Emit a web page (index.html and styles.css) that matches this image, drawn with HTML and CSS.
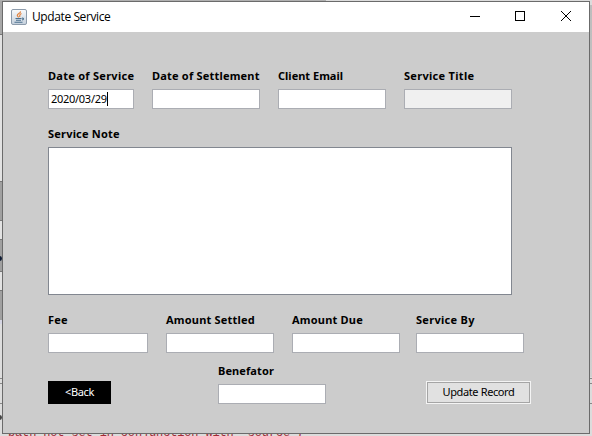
FILE: index.html
```html
<!DOCTYPE html>
<html lang="en">
<head>
<meta charset="utf-8">
<title>Update Service</title>
<link rel="stylesheet" href="styles.css">
</head>
<body>
<div class="desktop">
  <div class="console">path not set in conjunction with -source 7</div>
  <main class="window">
    <header class="titlebar">
      <svg class="java" width="16" height="16" viewBox="0 0 16 16">
        <defs><linearGradient id="g" x2="0" y2="1"><stop stop-color="#fafbfc"/><stop offset="1" stop-color="#c3cfdc"/></linearGradient></defs>
        <rect x=".5" y=".5" width="15" height="15" rx="1.5" fill="url(#g)" stroke="#8c9bab"/>
        <path d="M9.500 2.300C10 4 6 5 6.300 6.500c.1.8 1 1.200 1.300 1.900M10.500 4.500C8 5.500 8.800 6.500 8.700 8" fill="none" stroke="#e58540" stroke-width="1.200"/>
        <path d="M4.500 9.500h6M5 11.300h5M3.500 13.300h8M11 9.300c2-.7 2 1.200 0 1.700" fill="none" stroke="#4c718f" stroke-width="1.100"/>
      </svg>
      <h1 class="title">Update Service</h1>
      <svg class="controls" width="106" height="14" viewBox="0 0 106 14" fill="none" stroke="#000">
        <path d="M2 6.500h10M47.500 1.500h9v9h-9z" shape-rendering="crispEdges"/>
        <path d="M93 1l10 10M103 1L93 11"/>
      </svg>
    </header>
    <form class="form">
      <div class="row">
        <label class="field w86"><span class="label t-dos">Date of Service</span><span class="input">2020/03/29<i class="caret"></i></span></label>
        <label class="field"><span class="label t-set">Date of Settlement</span><span class="input"></span></label>
        <label class="field"><span class="label t-email">Client Email</span><span class="input"></span></label>
        <label class="field"><span class="label t-title">Service Title</span><span class="input disabled"></span></label>
      </div>
      <label class="field note"><span class="label t-note">Service Note</span><span class="area"></span></label>
      <div class="row">
        <label class="field w100"><span class="label t-fee">Fee</span><span class="input"></span></label>
        <label class="field"><span class="label t-amt">Amount Settled</span><span class="input"></span></label>
        <label class="field"><span class="label t-due">Amount Due</span><span class="input"></span></label>
        <label class="field by"><span class="label t-by">Service By</span><span class="input"></span></label>
      </div>
      <div class="row actions">
        <button type="button" class="back">&lt;Back</button>
        <label class="field"><span class="label t-ben">Benefator</span><span class="input"></span></label>
        <button type="button" class="update"><span>Update Record</span></button>
      </div>
    </form>
  </main>
</div>
</body>
</html>
```
FILE: styles.css
```css
* { box-sizing: border-box; }
body { margin: 0; font: 11px/14px "Noto Sans", sans-serif; color: #000; }
.desktop {
  position: relative; width: 592px; height: 436px; overflow: hidden; padding: 1px 2px 2px;
  background:
    linear-gradient(#b0b0b0, #b0b0b0) 0 0 / 326px 1px no-repeat,
    linear-gradient(#bdbdbd, #d0d0d0) 590px 5px / 2px 372px no-repeat,
    linear-gradient(#888 0 0) 590px 378px / 2px 1px no-repeat,
    linear-gradient(#888 0 0) 590px 383px / 2px 1px no-repeat,
    linear-gradient(#888 0 0) 590px 403px / 2px 1px no-repeat,
    linear-gradient(#a8a8a8 34px, #777 34px 35px, #e2e2e2 35px 181px, #777 181px 182px, #a0a0a0 182px 220px, #777 220px 221px, #e2e2e2 221px 239px, #777 239px 240px, #a0a0a0 240px 271px, #777 271px 272px, #e2e2e2 272px 290px, #777 290px 291px, #a0a0a0 291px 320px, #d5d5e3 320px 324px, #ddd 324px 378px, #888 378px 379px, #ddd 379px 383px, #888 383px 384px, #ddd 384px 403px, #888 403px 404px, #ddd 404px) 0 0 / 2px 434px no-repeat,
    #dcdcdc;
}
/* pieces of the markers in the editor behind the window */
.desktop::before, .desktop::after {
  content: ""; position: absolute; left: -3px; width: 5px; height: 5px; border-radius: 50%; background: #0d1a33;
}
.desktop::before { top: 256px; }
.desktop::after { top: 415px; background: #444; }
.console {
  position: absolute; left: 8px; top: 426px; white-space: pre;
  font: 12px/14px "Liberation Mono", monospace; letter-spacing: -.15px; color: #a42a36;
}
.window { position: relative; width: 588px; height: 433px; border: 1px solid #6b6b6b; background: #ccc; }
.titlebar { display: flex; align-items: center; height: 30px; padding: 0 15px 0 8px; background: #fff; }
.title { margin: 0 auto 0 5px; font: 12px/16px "Open Sans", sans-serif; letter-spacing: -.4px; }
.form { display: flex; flex-direction: column; padding: 37px 0 0 45px; }
.row { display: flex; gap: 18px; }
.field { display: flex; flex-direction: column; gap: 6px; width: 108px; }
.label { height: 14px; font-weight: 700; white-space: nowrap; letter-spacing: .2px; }
.t-dos { letter-spacing: .27px; }
.t-email { letter-spacing: 0; }
.t-title, .t-by { letter-spacing: .3px; }
.t-ben { letter-spacing: .1px; }
.input { display: flex; align-items: center; height: 20px; padding-left: 2px; border: 1px solid #abadb3; background: #fff; letter-spacing: -.28px; }
.disabled { background: #f0f0f0; }
.caret { width: 1px; height: 14px; background: #000; }
.area { height: 148px; border: 1px solid #828790; background: #fff; }
.w86 { width: 86px; }
.w100 { width: 100px; }
.by { margin-left: -2px; }
.note { width: 464px; margin: 18px 0; }
.actions { margin-top: 11px; gap: 0; align-items: flex-end; }
button { height: 23px; padding: 0; font: inherit; letter-spacing: -.38px; }
.back { width: 63px; margin-right: 107px; padding-bottom: 1px; border: 0; background: #000; color: #fff; }
.update { width: 105px; margin-left: 100px; border: 1px solid #f4f4f4; background: #e1e1e1; }
.update span { display: block; height: 21px; line-height: 18px; border: 1px solid #a5a5a5; }
```
